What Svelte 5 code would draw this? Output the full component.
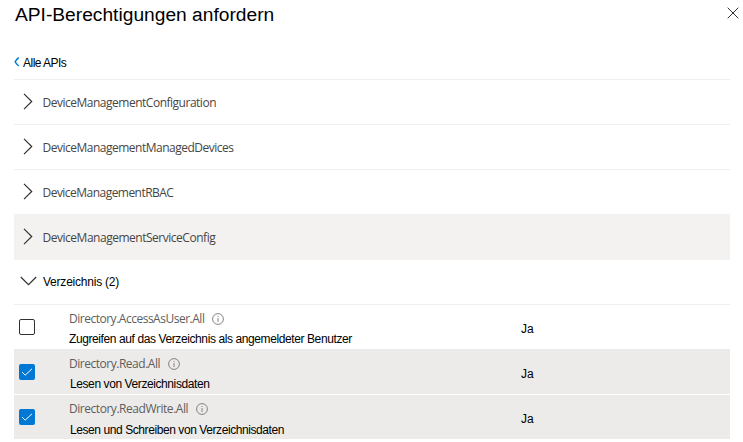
<script>
  const groups = [
    { name: 'DeviceManagementConfiguration', spacing: -0.49 },
    { name: 'DeviceManagementManagedDevices', spacing: -0.5 },
    { name: 'DeviceManagementRBAC', spacing: -0.53 },
    { name: 'DeviceManagementServiceConfig', spacing: -0.48, hover: true }
  ];
  let permissions = $state([
    { name: 'Directory.AccessAsUser.All', text: 'Zugreifen auf das Verzeichnis als angemeldeter Benutzer', checked: false, nameSpacing: -0.49, spacing: -0.4 },
    { name: 'Directory.Read.All', text: 'Lesen von Verzeichnisdaten', checked: true, nameSpacing: -0.48, spacing: -0.41 },
    { name: 'Directory.ReadWrite.All', text: 'Lesen und Schreiben von Verzeichnisdaten', checked: true, nameSpacing: -0.46, spacing: -0.42 }
  ]);
</script>

<main>
  <header>
    <h1>API-Berechtigungen anfordern</h1>
    <button class="close" aria-label="Schließen">
      <svg width="12" height="12" viewBox="0 0 12 12"><path d="M.7.7l10.6 10.6M11.3.7L.7 11.3" /></svg>
    </button>
  </header>
  <button class="back">
    <svg width="6" height="10" viewBox="0 0 6 10"><path d="M4.7.7Q2 2.8 1.2 4.8Q2 6.8 4.7 9" /></svg>
    <span>Alle APIs</span>
  </button>

  {#each groups as group}
    <button class="group" class:hover={group.hover}>
      <svg class="chevron" width="10" height="17" viewBox="0 0 10 17"><path d="M1 .8l7.7 7.7L1 16.2" /></svg>
      <span class="segoe" style:letter-spacing="{group.spacing}px">{group.name}</span>
    </button>
  {/each}

  <button class="group open">
    <svg class="chevron" width="17" height="10" viewBox="0 0 17 10"><path d="M.8 1l7.7 7.7L16.2 1" /></svg>
    <span>Verzeichnis (2)</span>
  </button>

  {#each permissions as item}
    <div class="permission" class:checked={item.checked}>
      <button class="box" role="checkbox" aria-checked={item.checked} aria-label={item.name} onclick={() => (item.checked = !item.checked)}>
        {#if item.checked}
          <svg width="16" height="16" viewBox="0 0 16 16"><path d="M3.2 8.2l3 3L13 4.8" /></svg>
        {/if}
      </button>
      <div class="details">
        <div class="name">
          <span class="segoe" style:letter-spacing="{item.nameSpacing}px">{item.name}</span>
          <svg width="12" height="12" viewBox="0 0 12 12"><circle cx="6" cy="6" r="5.4" /><path d="M6 5v4M6 3v1" /></svg>
        </div>
        <div class="text" style:letter-spacing="{item.spacing}px">{item.text}</div>
      </div>
      <span class="consent">Ja</span>
    </div>
  {/each}
</main>

<style>
  :global(body) { background: #fff; }
  main {
    box-sizing: border-box;
    width: 743px;
    height: 442px;
    padding: 0 13px 0 14px;
    overflow: hidden;
    font: 12px/16px "Liberation Sans", Arial, sans-serif;
    color: #000;
  }
  button { padding: 0; border: 0; background: none; font: inherit; color: inherit; text-align: left; }
  svg { display: block; flex: none; fill: none; stroke: #323130; }
  span, h1, .text { white-space: nowrap; }
  header { display: flex; justify-content: space-between; height: 48px; }
  h1 { margin: 3px 0 0 1px; font-size: 19.2px; line-height: 24px; font-weight: 400; letter-spacing: 0; }
  .close { width: 12px; height: 12px; margin: 7px -9px 0 0; }
  .back {
    box-sizing: border-box;
    display: flex;
    align-items: center;
    gap: 3px;
    width: 100%;
    height: 32px;
    padding-bottom: 2px;
    border-bottom: 1px solid #f0efee;
  }
  .back svg { stroke: #0078d4; stroke-width: 1.5; margin-bottom: 2px; }
  .back span { letter-spacing: -0.52px; }
  .group {
    box-sizing: border-box;
    display: flex;
    align-items: center;
    width: 100%;
    height: 45px;
    padding: 0 0 0 9px;
    border-bottom: 1px solid #f0efee;
  }
  .group .chevron { margin: 0 9.5px 2px 0; stroke-width: 1.2; }
  .group.hover { height: 46px; margin-top: -1px; padding-top: 1px; background: #f3f2f1; border-color: #f3f2f1; }
  .group.open { padding-left: 6px; }
  .group.open .chevron { margin-right: 6px; }
  .group.open span { letter-spacing: -0.22px; }
  .segoe { font-family: "Open Sans", "Noto Sans", sans-serif; font-weight: 400; color: #484644; padding-top: 2px; }
  .permission {
    box-sizing: border-box;
    display: grid;
    grid-template-columns: 55px 452px 1fr;
    height: 45px;
    border-bottom: 1px solid #edebe9;
  }
  .permission.checked { background: #ecebe9; border-color: #fff; }
  .box {
    box-sizing: border-box;
    width: 16px;
    height: 16px;
    margin: 14px 0 0 5px;
    border: 1px solid #323130;
    border-radius: 2px;
  }
  .checked .box { border: 0; background: #0078d4; }
  .box svg { stroke: #fff; }
  .name { display: flex; align-items: center; gap: 8px; height: 18px; margin-top: 5px; }
  .name svg { stroke: #797775; stroke-width: 0.9; margin-bottom: 1px; }
  .name .segoe { padding: 0; color: #605e5c; }
  .text { margin-top: 3px; }
  .checked .text { margin-left: 1px; }
  .permission:last-child .text { margin-top: 4px; }
  .consent { margin-top: 16px; }
</style>
